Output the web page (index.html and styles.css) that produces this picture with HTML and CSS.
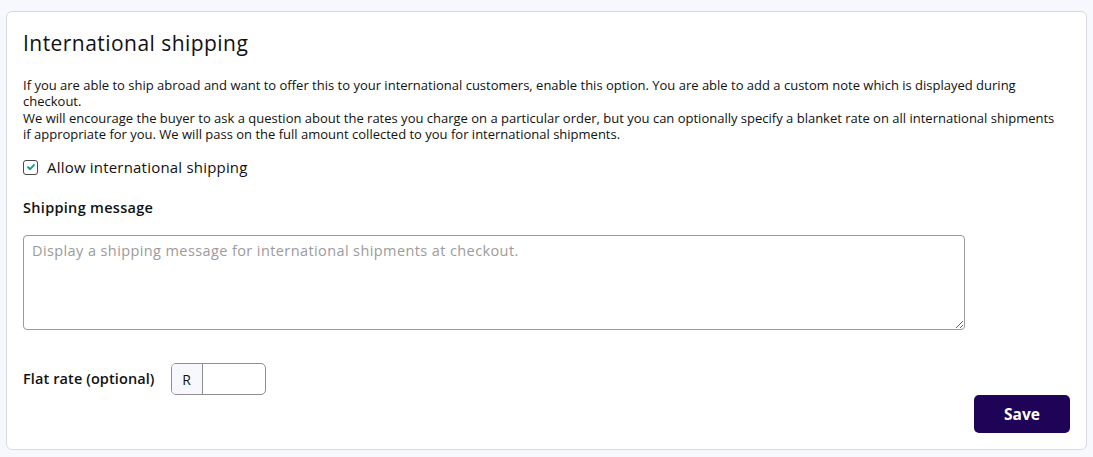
FILE: index.html
```html
<!DOCTYPE html>
<html lang="en">
<head>
<meta charset="utf-8">
<title>International shipping</title>
<link rel="stylesheet" href="styles.css">
</head>
<body>
<section class="card">
  <h2 class="title">International shipping</h2>
  <p class="intro">If you are able to ship abroad and want to offer this to your international customers, enable this option. You are able to add a custom note which is displayed during checkout.<br>We will encourage the buyer to ask a question about the rates you charge on a particular order, but you can optionally specify a blanket rate on all international shipments if appropriate for you. We will pass on the full amount collected to you for international shipments.</p>
  <label class="check-row">
    <span class="checkbox">
      <svg viewBox="0 0 14 14" width="14" height="14"><path d="M3.6 7.2 L6 9.5 L10.4 4.8" fill="none" stroke="#16a08e" stroke-width="2.4" stroke-linecap="round" stroke-linejoin="round"/></svg>
    </span>
    <span class="check-label">Allow international shipping</span>
  </label>
  <h3 class="field-label">Shipping message</h3>
  <textarea class="message" placeholder="Display a shipping message for international shipments at checkout."></textarea>
  <div class="rate-row">
    <span class="field-label inline">Flat rate (optional)</span>
    <div class="rate-input">
      <span class="prefix">R</span>
      <span class="rate-value"></span>
    </div>
  </div>
  <div class="actions">
    <button class="save">Save</button>
  </div>
</section>
</body>
</html>
```
FILE: styles.css
```css
html, body {
  margin: 0;
  padding: 0;
  background: #f7f8fd;
  font-family: "Open Sans", "Liberation Sans", sans-serif;
  color: #111;
}
.card {
  box-sizing: border-box;
  margin: 11px 0 0 6px;
  width: 1081px;
  height: 439px;
  background: #fff;
  border: 1px solid #d8dae2;
  border-radius: 6px;
  padding: 19px 16px 16px 16px;
  display: flex;
  flex-direction: column;
}
.title {
  margin: 0;
  font-size: 21px;
  font-weight: 400;
  line-height: 24px;
  letter-spacing: 0.45px;
}
.intro {
  margin: 22px 0 0 0;
  max-width: 1040px;
  font-size: 13px;
  line-height: 16.3px;
}
.check-row {
  margin-top: 16px;
  display: flex;
  align-items: center;
  gap: 9px;
  height: 18px;
}
.checkbox {
  box-sizing: border-box;
  width: 15px;
  height: 15px;
  border: 1.7px solid #4a4a4a;
  border-radius: 3px;
  display: flex;
  align-items: center;
  justify-content: center;
}
.checkbox svg { display: block; width: 12px; height: 12px; }
.check-label {
  font-size: 15px;
  letter-spacing: 0.2px;
}
.field-label {
  margin: 23px 0 0 0;
  font-size: 14.5px;
  font-weight: 600;
  line-height: 18px;
  letter-spacing: 0.3px;
}
.field-label.inline { margin: 0; letter-spacing: 0.1px; }
.message {
  box-sizing: border-box;
  margin-top: 18px;
  width: 942px;
  height: 95px;
  border: 1px solid #9a9a9a;
  border-radius: 4px;
  padding: 5px 8px;
  font-family: inherit;
  font-size: 14.5px;
  letter-spacing: 0.4px;
  resize: vertical;
}
.message::placeholder { color: #9b9b9b; }
.rate-row {
  margin-top: 33px;
  display: flex;
  align-items: center;
  gap: 16px;
}
.rate-input {
  box-sizing: border-box;
  display: flex;
  width: 95px;
  height: 32px;
  border: 1px solid #8f8f8f;
  border-radius: 5px;
  overflow: hidden;
}
.prefix {
  width: 30px;
  background: #f6f8fd;
  border-right: 1px solid #8f8f8f;
  display: flex;
  align-items: center;
  justify-content: center;
  font-size: 14px;
}
.rate-value { flex: 1; }
.actions {
  display: flex;
  justify-content: flex-end;
}
.save {
  width: 96px;
  height: 38px;
  background: #1e0356;
  color: #fff;
  border: none;
  border-radius: 5px;
  font-family: inherit;
  font-size: 15.5px;
  font-weight: 700;
  cursor: pointer;
}
```
